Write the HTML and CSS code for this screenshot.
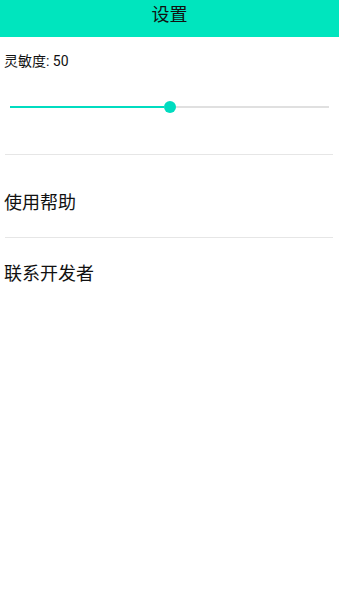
FILE: index.html
```html
<!DOCTYPE html>
<html lang="zh">
<head>
  <meta charset="UTF-8" />
  <meta name="viewport" content="width=device-width, initial-scale=1.0"/>
  <title>设置</title>
  <link rel="stylesheet" href="styles.css">
</head>
<body>
  <header class="topbar">设置</header>

  <div class="sensitivity">
    <div class="label">灵敏度: 50</div>
    <div class="slider">
      <div class="track-fill"></div>
      <div class="thumb"></div>
      <div class="track-rest"></div>
    </div>
  </div>

  <div class="divider"></div>
  <div class="item first">使用帮助</div>
  <div class="divider"></div>
  <div class="item">联系开发者</div>
</body>
</html>
```

FILE: styles.css
```css
body {
  margin: 0;
  font-family: Roboto, "Noto Sans CJK SC", sans-serif;
  color: #111;
  background: #fff;
}
.topbar {
  height: 37px;
  line-height: 29px;
  background: #00e5be;
  text-align: center;
  font-size: 18px;
}
.sensitivity {
  padding-left: 4px;
}
.label {
  margin-top: 14px;
  font-size: 14px;
  line-height: 20px;
}
.slider {
  display: flex;
  align-items: center;
  height: 12px;
  margin: 30px 10px 0 6px;
}
.track-fill {
  flex: 1;
  height: 2px;
  background: #00dcc0;
}
.thumb {
  width: 12px;
  height: 12px;
  border-radius: 50%;
  background: #00dcc0;
}
.track-rest {
  flex: 1;
  height: 2px;
  background: #e0e0e0;
}
.divider {
  height: 1px;
  background: #e6e6e6;
  margin: 41px 6px 0 5px;
}
.item {
  padding: 24px 4px 21px;
  font-size: 18px;
  line-height: 24px;
}
.item.first {
  padding-top: 36px;
  padding-bottom: 0;
}
.item.first + .divider {
  margin-top: 22px;
}
```
